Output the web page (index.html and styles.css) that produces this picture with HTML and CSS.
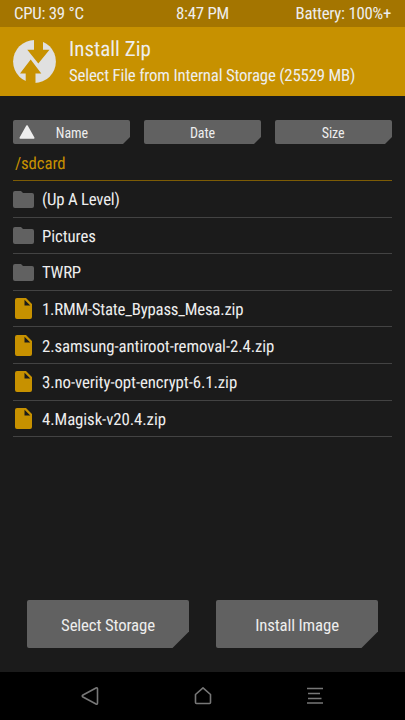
FILE: index.html
```html
<!DOCTYPE html>
<html lang="en">
<head>
<meta charset="utf-8">
<title>Install Zip</title>
<link rel="stylesheet" href="styles.css">
</head>
<body>
<div class="status"><span>CPU: 39 °C</span><span>8:47 PM</span><span>Battery: 100%+</span></div>
<header class="header">
<svg class="logo" viewBox="0 0 43 43"><circle cx="21.5" cy="21.5" r="21.4" fill="#e0e0e0"/><path fill="#c79100" d="M21 0H30V9.700H36.500L25.300 23.500L14.300 9.700H21ZM17.700 19.500L28.300 33.500H22.500V43H12.700V33.500H7Z"/></svg>
<div class="titles"><h1>Install Zip</h1><p>Select File from Internal Storage (25529 MB)</p></div>
</header>
<main class="main">
<div class="sorts">
<button class="sort"><svg viewBox="0 0 117 24"><path class="plate" d="M2 0H115Q117 0 117 2V17L110 24H2Q0 24 0 22V2Q0 0 2 0Z"/><path d="M14 6L20.700 18H7.300Z" fill="#eee" stroke="#eee" stroke-width="1.600" stroke-linejoin="round"/></svg><span>Name</span></button>
<button class="sort"><svg viewBox="0 0 117 24"><path class="plate" d="M2 0H115Q117 0 117 2V17L110 24H2Q0 24 0 22V2Q0 0 2 0Z"/></svg><span>Date</span></button>
<button class="sort"><svg viewBox="0 0 117 24"><path class="plate" d="M2 0H115Q117 0 117 2V17L110 24H2Q0 24 0 22V2Q0 0 2 0Z"/></svg><span>Size</span></button>
</div>
<div class="path"><span>/sdcard</span></div>
<ul class="files">
<li><svg class="folder" viewBox="0 0 21 17"><path d="M2 0H8L10 2H19Q21 2 21 4V15Q21 17 19 17H2Q0 17 0 15V2Q0 0 2 0Z"/></svg><span class="tight">(Up A Level)</span></li>
<li><svg class="folder" viewBox="0 0 21 17"><path d="M2 0H8L10 2H19Q21 2 21 4V15Q21 17 19 17H2Q0 17 0 15V2Q0 0 2 0Z"/></svg><span>Pictures</span></li>
<li><svg class="folder" viewBox="0 0 21 17"><path d="M2 0H8L10 2H19Q21 2 21 4V15Q21 17 19 17H2Q0 17 0 15V2Q0 0 2 0Z"/></svg><span class="tight">TWRP</span></li>
<li><svg class="file" viewBox="0 0 21 21"><path d="M4 0H13L19 6V19Q19 21 17 21H4Q2 21 2 19V2Q2 0 4 0ZM11.500 1.700V7.500H17.300Z"/></svg><span class="tight">1.RMM-State_Bypass_Mesa.zip</span></li>
<li><svg class="file" viewBox="0 0 21 21"><path d="M4 0H13L19 6V19Q19 21 17 21H4Q2 21 2 19V2Q2 0 4 0ZM11.500 1.700V7.500H17.300Z"/></svg><span>2.samsung-antiroot-removal-2.4.zip</span></li>
<li><svg class="file" viewBox="0 0 21 21"><path d="M4 0H13L19 6V19Q19 21 17 21H4Q2 21 2 19V2Q2 0 4 0ZM11.500 1.700V7.500H17.300Z"/></svg><span>3.no-verity-opt-encrypt-6.1.zip</span></li>
<li><svg class="file" viewBox="0 0 21 21"><path d="M4 0H13L19 6V19Q19 21 17 21H4Q2 21 2 19V2Q2 0 4 0ZM11.500 1.700V7.500H17.300Z"/></svg><span>4.Magisk-v20.4.zip</span></li>
</ul>
<div class="actions">
<button class="action"><svg viewBox="0 0 162 48"><path class="plate" d="M2 0H160Q162 0 162 2V31.500L145.500 48H2Q0 48 0 46V2Q0 0 2 0Z"/></svg><span>Select Storage</span></button>
<button class="action"><svg viewBox="0 0 162 48"><path class="plate" d="M2 0H160Q162 0 162 2V31.500L145.500 48H2Q0 48 0 46V2Q0 0 2 0Z"/></svg><span>Install Image</span></button>
</div>
</main>
<nav class="nav">
<svg viewBox="0 0 20 20"><path d="M16 2Q17.500 1.300 17.500 3V17Q17.500 18.700 16 18L3 11Q1.500 10 3 9Z"/></svg>
<svg viewBox="0 0 20 20"><path d="M10 1.800L17.500 8.500V16.500Q17.500 17.500 16.500 17.500H3.500Q2.500 17.500 2.500 16.500V8.500Z"/></svg>
<svg viewBox="0 0 20 20"><path d="M2 2.500H18M3 7.500H15M3 12.500H16.500M2 17H18"/></svg>
</nav>
</body>
</html>
```
FILE: styles.css
```css
* { box-sizing: border-box; margin: 0; padding: 0; }
body { width: 405px; height: 720px; display: flex; flex-direction: column; background: #1b1b1b; color: #eee; font-family: "Roboto Condensed", Roboto, sans-serif; font-stretch: 75%; font-size: 16.800px; letter-spacing: -0.08px; text-rendering: geometricPrecision; overflow: hidden; }
svg { display: block; flex: none; }
.status { height: 27px; background: #a47500; display: grid; grid-template-columns: 1fr auto 1fr; align-items: center; padding: 0 14px; letter-spacing: -0.24px; }
.status span:last-child { text-align: right; }
.header { height: 69px; background: #c79100; display: flex; padding: 13px 13px 0; gap: 13px; }
.logo { width: 43px; height: 43px; }
h1 { font-size: 21px; font-weight: 400; line-height: 22px; margin-top: -1px; letter-spacing: 0; }
.titles p { line-height: 20px; margin-top: 5px; letter-spacing: -0.18px; }
.main { flex: 1; padding: 24px 13.400px 0; display: flex; flex-direction: column; }
.sorts { display: flex; justify-content: space-between; }
button { border: 0; background: none; color: inherit; font: inherit; letter-spacing: inherit; display: grid; place-items: center; }
button > * { grid-area: 1 / 1; }
.plate { fill: #616161; }
.sort { width: 117px; height: 24px; font-size: 14px; }
.sort span { padding-top: 2px; }
.sort svg { width: 117px; height: 24px; }
.path { height: 37px; border-bottom: 1px solid #7d5c05; color: #c79100; padding: 10px 1.500px; line-height: 20px; }
.files { list-style: none; }
.files li { height: 36.600px; border-bottom: 1px solid #434343; display: flex; align-items: center; gap: 7.600px; }
.files span { padding-top: 3px; }
.files .tight { letter-spacing: -0.22px; }
.folder { width: 21px; height: 17px; fill: #616161; margin-top: 1px; }
.file { width: 21px; height: 21px; fill: #c79100; }
.actions { display: flex; justify-content: space-between; margin: auto 13.600px 24px; letter-spacing: -0.14px; }
.action { width: 162px; height: 48px; }
.action span { padding-top: 2px; }
.action svg { width: 162px; height: 48px; }
.nav { height: 48px; background: #000; display: flex; justify-content: center; align-items: center; gap: 92.500px; }
.nav svg { width: 20px; height: 20px; fill: none; stroke: #777; stroke-width: 1.600; stroke-linejoin: round; }
```
